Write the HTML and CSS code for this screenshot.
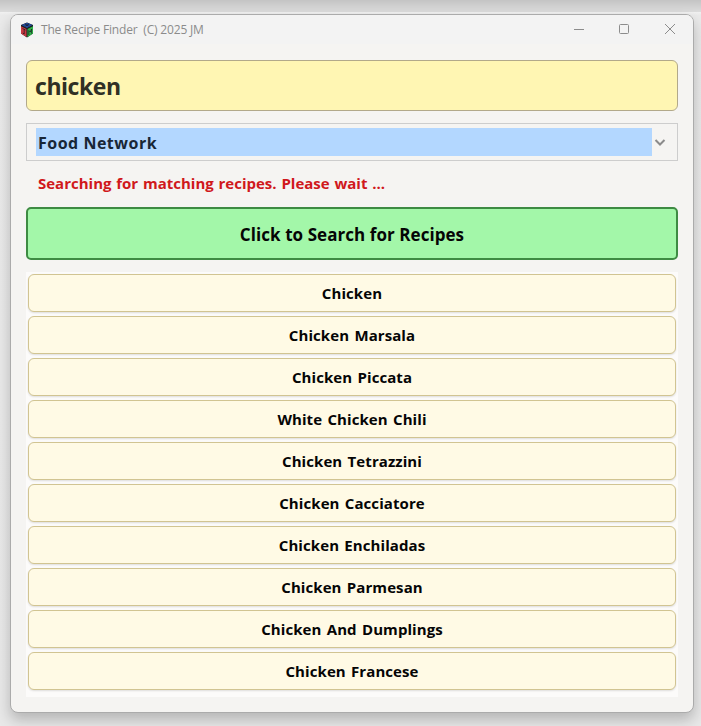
FILE: index.html
```html
<!DOCTYPE html>
<html lang="en">
<head>
<meta charset="utf-8">
<title>The Recipe Finder</title>
<link rel="stylesheet" href="styles.css">
</head>
<body>
<main class="window">
  <header class="titlebar">
    <svg class="logo" width="14" height="16" viewBox="0 0 14 16">
      <path d="M7 .5 13 3v8.500L7 15.500 1 11.500V3z" fill="#18201f"/>
      <path d="M7 .8 12.500 3 7 6 1.500 3z" fill="#23499b"/>
      <path d="M1 4.200 6.500 7v8L1 11.500z" fill="#ca3a42"/>
      <path d="M13 4.200 7.500 7v8L13 11.500z" fill="#2fb249"/>
      <path d="M5 2 8.500 4M9 2 5.500 4M2.500 6.500 5.500 8M4.200 7.500v4.500L2.800 11M8.800 13V8.500l1.500 1.500 1.300-3v4.500" fill="none" stroke="#161b1c" stroke-width=".7"/>
    </svg>
    <span class="title">The Recipe Finder&nbsp; (C) 2025 JM</span>
    <svg class="controls" width="104" height="14" viewBox="0 0 104 14" fill="none" stroke="#8c8c8c">
      <path d="M1 6.500h10"/>
      <rect x="46.500" y="1.500" width="9" height="9" rx="1"/>
      <path d="m92 1 10 10M102 1 92 11"/>
    </svg>
  </header>
  <section class="content">
    <div class="search"><span>chicken</span></div>
    <div class="select">
      <div class="selected"><span>Food Network</span></div>
      <svg class="chevron" width="12" height="8" viewBox="0 0 12 8"><path d="m1.500 2 4.500 4.500 4.500-4.500" fill="none" stroke="#8b8b8b" stroke-width="2"/></svg>
    </div>
    <p class="status"><span>Searching for matching recipes. Please wait ...</span></p>
    <button class="go"><span>Click to Search for Recipes</span></button>
    <div class="results">
      <button class="recipe"><span>Chicken</span></button>
      <button class="recipe"><span>Chicken Marsala</span></button>
      <button class="recipe"><span>Chicken Piccata</span></button>
      <button class="recipe"><span>White Chicken Chili</span></button>
      <button class="recipe"><span>Chicken Tetrazzini</span></button>
      <button class="recipe"><span>Chicken Cacciatore</span></button>
      <button class="recipe"><span>Chicken Enchiladas</span></button>
      <button class="recipe"><span>Chicken Parmesan</span></button>
      <button class="recipe"><span>Chicken And Dumplings</span></button>
      <button class="recipe"><span>Chicken Francese</span></button>
    </div>
  </section>
</main>
</body>
</html>
```
FILE: styles.css
```css
* { box-sizing: border-box; }
html { height: 100%; }
body {
  margin: 0;
  height: 726px;
  padding: 14px 7px 13px 10px;
  overflow: hidden;
  font-family: "Open Sans", "Noto Sans", sans-serif;
  background: linear-gradient(#c4c4c4, #dcdcdc 12px, #f1f1f1 12px, #eaeaea 15px, #e8e8e8);
}
.window {
  height: 699px;
  border: 1px solid #ababab;
  border-radius: 8px;
  background: #f5f4f2;
  box-shadow: 0 7px 14px rgba(0, 0, 0, .22);
  overflow: hidden;
}
.titlebar {
  height: 29px;
  display: flex;
  align-items: center;
  padding: 0 16px 0 9px;
  background: #f3f3f3;
}
.logo { margin-right: 7px; }
.title { flex: 1; font-size: 12px; color: #8b8b8b; letter-spacing: -.18px; }
.content { padding: 16px 15px 0; }
.search {
  height: 51px;
  border: 1px solid #b2a98a;
  border-radius: 6px;
  background: #fff6b3;
  padding-left: 8px;
  font-size: 23px;
  font-weight: 700;
  letter-spacing: -.45px;
  line-height: 50px;
  color: #303025;
}
.select {
  height: 38px;
  margin-top: 12px;
  border: 1px solid #cdcdcd;
  padding: 4px 11px 4px 9px;
  display: flex;
  align-items: center;
  gap: 2px;
}
.selected {
  flex: 1;
  height: 28px;
  padding-left: 2px;
  background: #b3d7ff;
  font-size: 16px;
  font-weight: 700;
  letter-spacing: .5px;
  line-height: 30px;
  color: #182636;
}
.status {
  margin: 0;
  height: 46px;
  padding-left: 12px;
  font-size: 15px;
  font-weight: 700;
  line-height: 45px;
  word-spacing: .9px;
  color: #d0181c;
}
button { display: block; width: 100%; padding: 0; font-family: inherit; font-weight: 700; color: #050505; }
.go {
  height: 53px;
  padding-top: 2px;
  border: 2px solid #3e8b43;
  border-radius: 5px;
  background: #a3f7a9;
  font-size: 17px;
  letter-spacing: .06px;
}
.results {
  height: 425px;
  margin-top: 12px;
  padding: 2px;
  background: #fcfbfa;
  display: flex;
  flex-direction: column;
  gap: 4px;
}
.recipe {
  height: 38px;
  flex: none;
  border: 1px solid #d1c492;
  border-radius: 6px;
  background: #fffae5;
  box-shadow: 0 1px 2px rgba(0, 0, 0, .12);
  font-size: 15px;
  letter-spacing: .08px;
  word-spacing: 1.3px;
}
```
